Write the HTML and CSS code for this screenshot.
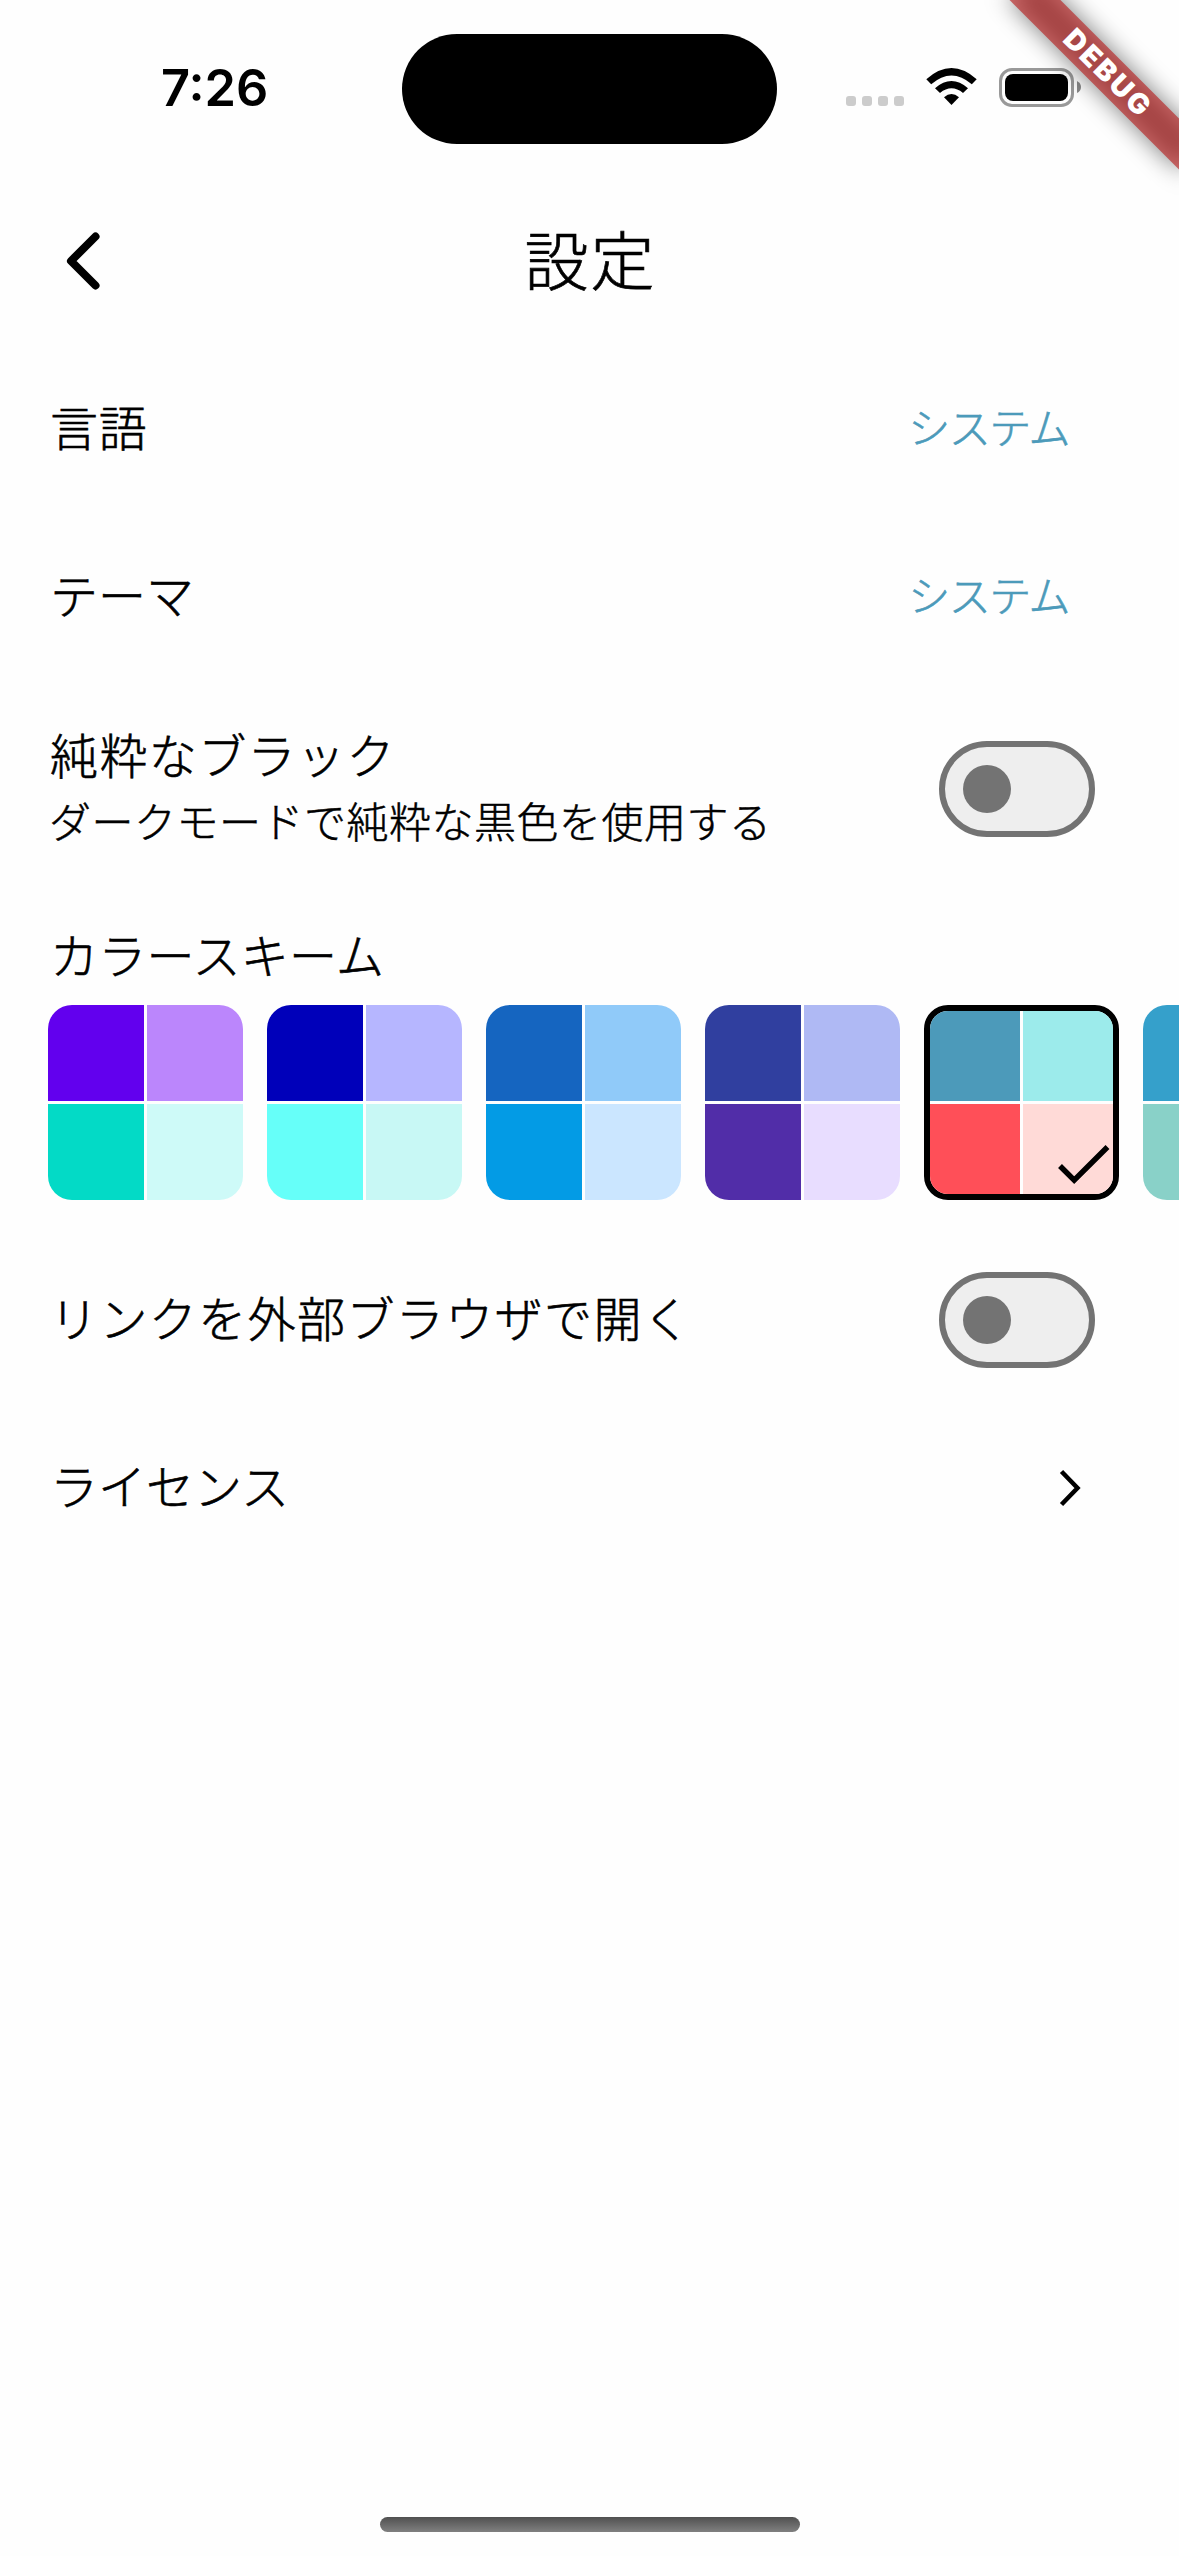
FILE: index.html
```html
<!DOCTYPE html>
<html lang="ja">
<head>
<meta charset="utf-8">
<title>設定</title>
<link rel="stylesheet" href="styles.css">
</head>
<body>
<div class="screen">
  <header class="status">
    <time class="clock">7:26</time>
    <div class="island"></div>
    <div class="indicators">
      <div class="signal"><i></i><i></i><i></i><i></i></div>
      <svg class="wifi" width="51" height="38" viewBox="0 0 51 38">
        <path d="M0.3 11.2Q25.5-11.2 50.7 11.2L45.8 16.2Q25.5-1.4 5.2 16.2Z"/>
        <path d="M9 20.2Q25.5 5.800 42 20.200L37 25Q25.500 15.700 14 25Z"/>
        <path d="M18 29.200Q25.500 22.800 33 29.200L25.500 37Z"/>
      </svg>
      <div class="battery"><div class="charge"></div></div>
      <svg class="nub" width="4" height="12" viewBox="0 0 4 12"><path d="M0 0Q4 2 4 6T0 12Z"/></svg>
    </div>
  </header>
  <nav class="appbar">
    <svg class="back" width="36" height="60" viewBox="0 0 36 60"><path d="M31.500 5.500L7 30L31.500 54.500"/></svg>
    <h1>設定</h1>
  </nav>
  <main>
    <section class="row"><span class="label">言語</span><a class="value">システム</a></section>
    <section class="row"><span class="label snug">テーマ</span><a class="value">システム</a></section>
    <section class="row tall">
      <div class="texts"><span class="label wide">純粋なブラック</span><span class="hint">ダークモードで純粋な黒色を使用する</span></div>
      <div class="switch"><div class="thumb"></div></div>
    </section>
    <section class="schemes">
      <span class="label snug">カラースキーム</span>
      <div class="swatches">
        <div class="swatch violet"><i></i><i></i><i></i><i></i></div>
        <div class="swatch navy"><i></i><i></i><i></i><i></i></div>
        <div class="swatch blue"><i></i><i></i><i></i><i></i></div>
        <div class="swatch indigo"><i></i><i></i><i></i><i></i></div>
        <div class="swatch coral selected"><i></i><i></i><i></i><i></i>
          <svg class="check" width="56" height="44" viewBox="0 0 56 44"><path d="M4 21L18.200 35.200L51.500 2"/></svg>
        </div>
        <div class="swatch sea"><i></i><i></i><i></i><i></i></div>
      </div>
    </section>
    <section class="row"><span class="label wide">リンクを外部ブラウザで開く</span><div class="switch"><div class="thumb"></div></div></section>
    <section class="row"><span class="label snug">ライセンス</span>
      <svg class="chevron" width="24" height="40" viewBox="0 0 24 40"><path d="M4.500 3.500L20.500 20L4.500 36.500"/></svg>
    </section>
  </main>
  <footer><div class="home"></div></footer>
  <div class="banner"><span>DEBUG</span></div>
</div>
</body>
</html>
```
FILE: styles.css
```css
* { box-sizing: border-box; }
body {
  margin: 0;
  background: #fefefe;
  color: #000;
  font-family: "Noto Sans CJK JP", sans-serif;
  font-weight: 300;
}
.screen {
  position: relative;
  width: 1179px;
  height: 2556px;
  overflow: hidden;
  display: flex;
  flex-direction: column;
}
.status {
  height: 177px;
  display: grid;
  grid-template-columns: 402px 375px 1fr;
  align-items: start;
}
.clock {
  padding: 57px 0 0 161px;
  font: 600 50.5px/62px Inter, sans-serif;
}
.island {
  height: 110px;
  margin-top: 34px;
  border-radius: 55px;
  background: #000;
}
.indicators { display: flex; align-items: flex-start; padding: 68px 0 0 69px; }
.signal { display: flex; gap: 6px; margin-top: 28px; }
.signal i { width: 10px; height: 10px; border-radius: 3px; background: #ccc; }
.wifi { margin: 0 22px; }
.battery {
  width: 75px;
  height: 39px;
  padding: 3px;
  border: 3px solid #999;
  border-radius: 13px;
}
.charge { height: 27px; border-radius: 8px; background: #000; }
.nub { margin: 13px 0 0 3px; fill: #888; }
.appbar {
  height: 168px;
  display: grid;
  grid-template-columns: 100px 1fr 100px;
  align-items: center;
}
.back { margin-left: 64px; fill: none; stroke: #000; stroke-width: 8; stroke-linecap: round; stroke-linejoin: round; }
h1 {
  margin: 0;
  padding: 0 0 9px 2px;
  text-align: center;
  font-size: 64px;
  font-weight: 300;
  line-height: 84px;
  letter-spacing: 2px;
  -webkit-text-stroke: 0.7px;
}
main { flex: 1; }
.row {
  height: 168px;
  padding: 0 84px 0 48px;
  display: flex;
  align-items: center;
  justify-content: space-between;
}
.row.tall { height: 216px; }
.texts { display: flex; flex-direction: column; padding-bottom: 4px; }
.label {
  padding: 0 0 7px 2px;
  font-size: 48px;
  line-height: 65px;
  letter-spacing: 0.8px;
  -webkit-text-stroke: 0.6px;
}
.label.snug { letter-spacing: 0; }
.label.wide { letter-spacing: 1.4px; }
.schemes .label { letter-spacing: 0.3px; }
.hint {
  padding: 0 0 6px 1px;
  font-size: 42px;
  line-height: 54px;
  letter-spacing: 0.5px;
  -webkit-text-stroke: 0.5px;
}
.value {
  margin-right: 26px;
  padding-bottom: 7px;
  font-size: 42px;
  line-height: 53px;
  letter-spacing: -1.500px;
  color: #4c9aba;
  -webkit-text-stroke: 0.6px;
}
.switch {
  width: 156px;
  height: 96px;
  border: 6px solid #737373;
  border-radius: 48px;
  background: #eee;
  display: flex;
  align-items: center;
  padding-left: 18px;
}
.thumb { width: 48px; height: 48px; border-radius: 50%; background: #737373; }
.schemes {
  height: 339px;
  padding: 24px 0 0 48px;
  display: flex;
  flex-direction: column;
  gap: 12px;
  overflow: hidden;
}
.swatches { display: flex; gap: 24px; }
.swatch {
  position: relative;
  flex: none;
  width: 195px;
  height: 195px;
  display: grid;
  grid-template-columns: 1fr 1fr;
  grid-template-rows: 1fr 1fr;
  gap: 3px;
  border-radius: 24px;
  overflow: hidden;
}
.swatch i:nth-child(1) { background: var(--a); }
.swatch i:nth-child(2) { background: var(--b); }
.swatch i:nth-child(3) { background: var(--c); }
.swatch i:nth-child(4) { background: var(--d); }
.selected { border: 6px solid #000; }
.violet { --a: #6200ee; --b: #bb86fc; --c: #03dac6; --d: #cefaf8; }
.navy { --a: #0000ba; --b: #b6b6ff; --c: #66fff9; --d: #c8f8f5; }
.blue { --a: #1565c0; --b: #90caf9; --c: #039be5; --d: #cbe6ff; }
.indigo { --a: #303f9f; --b: #afb9f4; --c: #512da8; --d: #e8ddff; }
.coral { --a: #4c9aba; --b: #9cebeb; --c: #ff4f58; --d: #ffdad7; }
.sea { --a: #35a0cb; --b: #71d3ed; --c: #89d1c8; --d: #91f4e8; }
.check { position: absolute; right: 1px; bottom: 5px; fill: none; stroke: #000; stroke-width: 5.500; }
.chevron { margin-right: 14px; fill: none; stroke: #000; stroke-width: 4.500; }
footer { height: 39px; display: flex; justify-content: center; align-items: flex-start; }
.home { width: 420px; height: 15px; border-radius: 8px; background: linear-gradient(#505050, #808080); }
.banner {
  position: absolute;
  left: 987px;
  top: 54px;
  width: 240px;
  height: 36px;
  transform: rotate(45deg);
  display: flex;
  align-items: center;
  justify-content: center;
}
.banner::before, .banner::after { content: ""; position: absolute; inset: 0; }
.banner::before { background: rgba(0, 0, 0, 0.5); filter: blur(12px); }
.banner::after { background: rgba(183, 28, 28, 0.627); }
.banner span { position: relative; z-index: 1; padding-left: 3px; font: 900 28.5px/36px Inter, sans-serif; letter-spacing: 2.5px; color: #fff; }
```
